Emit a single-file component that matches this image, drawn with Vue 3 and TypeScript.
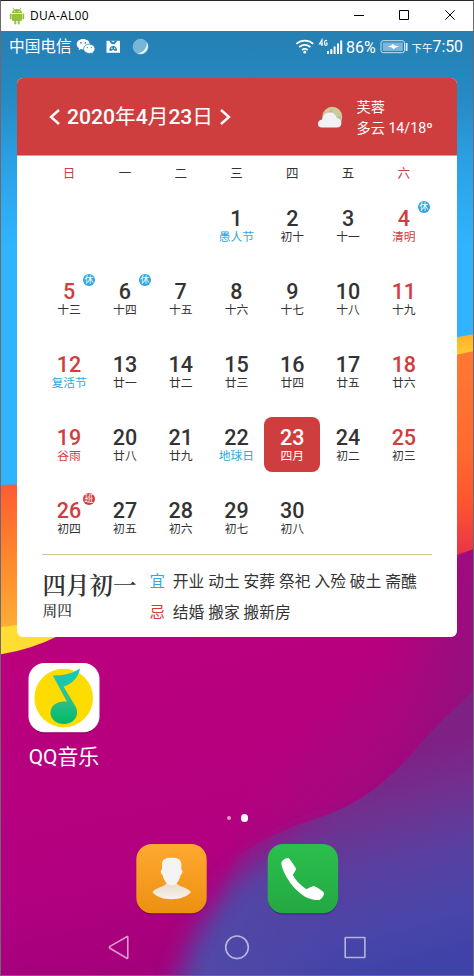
<script setup lang="ts">
interface Day {
  n: number
  sub: string
  red?: boolean
  subTone?: 'blue' | 'red'
  badge?: '休' | '班'
  selected?: boolean
}

const weekdays: string[] = ['日', '一', '二', '三', '四', '五', '六']
const leadingBlanks = 3

const lunar: string[] = [
  '愚人节', '初十', '十一', '清明', '十三', '十四', '十五', '十六', '十七', '十八',
  '十九', '复活节', '廿一', '廿二', '廿三', '廿四', '廿五', '廿六', '谷雨', '廿八',
  '廿九', '地球日', '四月', '初二', '初三', '初四', '初五', '初六', '初七', '初八',
]
const tones: Record<number, 'blue' | 'red'> = { 1: 'blue', 4: 'red', 12: 'blue', 19: 'red', 22: 'blue' }
const badges: Record<number, '休' | '班'> = { 4: '休', 5: '休', 6: '休', 26: '班' }

const days: Day[] = lunar.map((sub, i) => {
  const n = i + 1
  const column = (i + leadingBlanks) % 7
  return {
    n,
    sub,
    red: column === 0 || column === 6,
    subTone: tones[n],
    badge: badges[n],
    selected: n === 23,
  }
})

const good = ['开业', '动土', '安葬', '祭祀', '入殓', '破土', '斋醮'].join(' ')
const bad = ['结婚', '搬家', '搬新房'].join(' ')
</script>

<template>
  <div class="window">
    <header class="titlebar">
      <svg class="android" width="16" height="18" viewBox="0 0 16 18">
        <g fill="#97c03d">
          <path d="M3 6.1C3 3.600 5.200 2 8 2s5 1.600 5 4.100z" />
          <path d="M4 .7 5.400 3M12 .7 10.600 3" stroke="#97c03d" stroke-width=".8" />
          <path d="M3 6.800h10v6.300a1 1 0 0 1-1 1h-1.300v2.300a1 1 0 0 1-2 0v-2.300H7.300v2.300a1 1 0 0 1-2 0v-2.300H4a1 1 0 0 1-1-1z" />
          <rect x=".8" y="6.600" width="1.800" height="5.800" rx=".9" />
          <rect x="13.400" y="6.600" width="1.800" height="5.800" rx=".9" />
        </g>
        <circle cx="5.800" cy="4.300" r=".55" fill="#fff" /><circle cx="10.200" cy="4.300" r=".55" fill="#fff" />
      </svg>
      <span class="title">DUA-AL00</span>
      <svg class="controls" width="104" height="12" viewBox="0 0 104 12" fill="none" stroke="#000" stroke-width="1">
        <path d="M0 6.500h10M45.500 1.500h9v9h-9zM91.300 1.300l9.400 9.400M100.700 1.300l-9.400 9.400" />
      </svg>
    </header>

    <main class="screen">
      <svg class="wallpaper" viewBox="1 31 472 944" preserveAspectRatio="none">
        <defs>
          <linearGradient id="sky" gradientUnits="userSpaceOnUse" x1="0" y1="31" x2="0" y2="245">
            <stop offset="0" stop-color="#257fb3" />
            <stop offset=".32" stop-color="#268bc4" />
            <stop offset=".62" stop-color="#2ba1e4" />
            <stop offset="1" stop-color="#30b4ff" />
          </linearGradient>
          <linearGradient id="orangeL" gradientUnits="userSpaceOnUse" x1="0" y1="484" x2="0" y2="626">
            <stop offset="0" stop-color="#ff5b32" />
            <stop offset=".5" stop-color="#ff862d" />
            <stop offset="1" stop-color="#ffac34" />
          </linearGradient>
          <linearGradient id="orangeR" gradientUnits="userSpaceOnUse" x1="0" y1="350" x2="0" y2="554">
            <stop offset="0" stop-color="#ff7933" />
            <stop offset=".5" stop-color="#ff6a2f" />
            <stop offset=".75" stop-color="#ff5430" />
            <stop offset="1" stop-color="#e93448" />
          </linearGradient>
          <linearGradient id="yellowR" x1="0" y1="0" x2="0" y2="1">
            <stop offset="0" stop-color="#ffae2c" /><stop offset=".8" stop-color="#ffd731" />
          </linearGradient>
          <linearGradient id="magenta" gradientUnits="userSpaceOnUse" x1="150" y1="620" x2="230" y2="976">
            <stop offset="0" stop-color="#bb007d" />
            <stop offset=".65" stop-color="#b20080" />
            <stop offset="1" stop-color="#a1007a" />
          </linearGradient>
          <linearGradient id="magentaShade" gradientUnits="userSpaceOnUse" x1="330" y1="695" x2="440" y2="790">
            <stop offset="0" stop-color="#a4087e" stop-opacity="0" />
            <stop offset=".5" stop-color="#a3087e" stop-opacity=".8" />
            <stop offset="1" stop-color="#930b7c" />
          </linearGradient>
          <linearGradient id="edgeR" gradientUnits="userSpaceOnUse" x1="400" y1="0" x2="474" y2="0">
            <stop offset="0" stop-color="#90117f" stop-opacity="0" />
            <stop offset="1" stop-color="#90117f" stop-opacity=".7" />
          </linearGradient>
          <linearGradient id="indigo" gradientUnits="userSpaceOnUse" x1="340" y1="770" x2="395" y2="976">
            <stop offset="0" stop-color="#7f2085" />
            <stop offset=".22" stop-color="#71308f" />
            <stop offset=".48" stop-color="#593f9f" />
            <stop offset=".75" stop-color="#4a45a9" />
            <stop offset="1" stop-color="#3f42a8" />
          </linearGradient>
          <linearGradient id="hazeFade" gradientUnits="userSpaceOnUse" x1="215" y1="0" x2="335" y2="0">
            <stop offset="0" stop-color="#000" />
            <stop offset="1" stop-color="#fff" />
          </linearGradient>
          <mask id="softLeft" maskUnits="userSpaceOnUse" x="0" y="600" width="474" height="376">
            <path d="M0 600H474V976H0z" fill="url(#hazeFade)" />
          </mask>
          <filter id="soft" x="-20%" y="-20%" width="140%" height="140%"><feGaussianBlur stdDeviation="13" /></filter>
        </defs>
        <path d="M0 31H474V976H0z" fill="url(#sky)" />
        <path d="M380 352 474 334V370H380z" fill="url(#yellowR)" />
        <path d="M380 371 474 351V600H380z" fill="url(#orangeR)" />
        <path d="M0 485 60 483V640H0z" fill="url(#orangeL)" />
        <path d="M0 627 60 620V660H0z" fill="#ffdd31" />
        <path d="M0 654.500Q30 650 58 636L430 566 474 549V976H0z" fill="url(#magenta)" />
        <path d="M300 590 474 549V976H200Z" fill="url(#magentaShade)" />
        <path d="M400 575 474 549V750H400z" fill="url(#edgeR)" />
        <path d="M170 1000 195 935 236 878 272 854 340 825V1000z" fill="#504aa8" filter="url(#soft)" />
        <path d="M474 690Q443 718 419 745C382 790 349 808 315 819Q270 833 235 858L200 976H474z" fill="url(#indigo)" mask="url(#softLeft)" />
      </svg>

      <div class="statusbar">
        <span class="carrier">中国电信</span>
        <svg class="left-icons" width="74" height="18" viewBox="76 38 74 18">
          <g fill="#fff">
            <path d="M83.200 39c-3.700 0-6.500 2.300-6.500 5.200 0 1.700.9 3.100 2.400 4.100l-.7 2 2.400-1.200c.8.2 1.600.3 2.400.3 3.700 0 6.500-2.300 6.500-5.200S86.900 39 83.200 39z" />
            <path d="M89.300 44.200c-3.200 0-5.700 2-5.700 4.600s2.500 4.600 5.700 4.600c.7 0 1.300-.1 1.900-.3l2 1-.5-1.700c1.400-.8 2.200-2.100 2.200-3.600 0-2.600-2.500-4.600-5.600-4.600z" stroke="#2687be" stroke-width=".7" />
            <path d="M106.500 40.800h13.500v12h-13.500z" />
          </g>
          <g fill="#2687be">
            <circle cx="81" cy="42.800" r=".85" /><circle cx="85.400" cy="42.800" r=".85" />
            <circle cx="87.400" cy="47.600" r=".7" /><circle cx="91.300" cy="47.600" r=".7" />
            <path d="M109 40.800h2.200l2 1.500 2-1.500h2.200l-2.600 3.300h-3.200z" />
            <path d="M109.300 50.800c0-3.300 1.500-4.800 3.900-4.800s3.900 1.500 3.900 4.800h-2.400l-1.500-1.300-1.500 1.300z" />
          </g>
          <circle cx="111.800" cy="48.200" r=".7" fill="#fff" /><circle cx="114.700" cy="48.200" r=".7" fill="#fff" />
          <circle cx="140.600" cy="46.700" r="7.400" fill="#76b4d8" stroke="#8fc3e0" stroke-width=".8" />
          <path d="M147 42.500a7.700 7.700 0 0 1-10 10.600c5.500.2 9.500-4 10-10.600z" fill="#e4f3fa" />
        </svg>
        <svg class="signal" width="48" height="18" viewBox="296 38 48 18">
          <g fill="none" stroke="#fff" stroke-width="1.700">
            <path d="M297.300 43.800c5-4.300 12-4.300 17 0M300.200 47c3.500-2.800 7.700-2.800 11.200 0M303 50c2-1.500 3.600-1.500 5.600 0" />
          </g>
          <circle cx="305.800" cy="52.200" r="1.400" fill="#fff" />
          <path d="M328 50.900h2v3h-2zM331.300 49.200h2v4.700h-2zM334.600 46.500h2v7.400h-2zM338 43.500h2v10.400h-2zM341.200 40.500h2v13.400h-2z" fill="#fff" />
          <path d="M323 46v-6.300l-2.500 4.300h3.600M328 40.900c-.8-1-2.500-.9-2.500 2s1.900 3 2.500 1.900v-1.700h-1.200" fill="none" stroke="#fff" stroke-width="1.100" />
        </svg>
        <span class="percent">86%</span>
        <svg class="battery" width="28" height="14" viewBox="380 40 28 14">
          <rect x="381" y="40.700" width="23.500" height="12" rx="2.200" fill="none" stroke="#cce3f0" />
          <rect x="382.800" y="42.500" width="20" height="8.400" fill="#7db8da" />
          <path d="M387.500 46.600 391.800 45.300 392.500 43.800 394.600 45.500 399 46.300 395.500 47.800 393.700 49.300 391.500 47.600z" fill="#fff" />
          <path d="M406.600 43v8" stroke="#e4f1f8" stroke-width="1.800" />
        </svg>
        <span class="clock"><small>下午</small>7:50</span>
      </div>

      <section class="card">
        <div class="card-head">
          <svg width="12" height="18" viewBox="0 0 12 18" fill="none" stroke="#fff" stroke-width="2.400"><path d="M10 2 2 9l8 7" /></svg>
          <h1><b>2020</b>年<b>4</b>月<b>23</b>日</h1>
          <svg width="12" height="18" viewBox="0 0 12 18" fill="none" stroke="#fff" stroke-width="2.400"><path d="m2 2 8 7-8 7" /></svg>
          <svg class="weather-icon" width="26" height="22" viewBox="317 105.500 26 22">
            <circle cx="332.300" cy="116.300" r="10" fill="#cfca9e" />
            <circle cx="331" cy="111" r="1.600" fill="#bdb98f" /><circle cx="339" cy="117" r="1.400" fill="#bdb98f" />
            <path d="M321.800 127c-5.200 0-5.200-7.700.3-8 .5-3.500 3-7 8-7 4 0 6 2.500 6.600 5.600 6 .5 6.500 9.400.2 9.400z" fill="#f2f1f6" />
          </svg>
          <div class="weather"><span>芙蓉</span><span>多云 14/18º</span></div>
        </div>

        <div class="weekdays">
          <span v-for="(w, i) in weekdays" :key="w" :class="{ red: i === 0 || i === 6 }">{{ w }}</span>
        </div>
        <div class="days">
          <span v-for="b in leadingBlanks" :key="'b' + b"></span>
          <div v-for="d in days" :key="d.n" class="day" :class="{ selected: d.selected }">
            <b :class="{ red: d.red && !d.selected }">{{ d.n }}</b>
            <span :class="d.subTone">{{ d.sub }}</span>
            <i v-if="d.badge" :class="{ work: d.badge === '班' }">{{ d.badge }}</i>
          </div>
        </div>

        <div class="almanac">
          <div class="today">
            <div class="lunar-date">四月初一</div>
            <div class="lunar-week">周四</div>
          </div>
          <div class="advice">
            <p><em class="blue">宜</em>{{ good }}</p>
            <p><em class="red">忌</em>{{ bad }}</p>
          </div>
        </div>
      </section>

      <div class="app">
        <svg width="78" height="78" viewBox="25 660 78 78">
          <defs>
            <linearGradient id="note" x1="0" y1="0" x2="0" y2="1"><stop offset="0" stop-color="#0fc9c6" /><stop offset=".55" stop-color="#2fc08c" /><stop offset="1" stop-color="#00ba65" /></linearGradient>
          </defs>
          <rect x="29" y="664.500" width="70" height="69" rx="16" fill="#700050" opacity=".6" />
          <rect x="28.500" y="663" width="71" height="69.300" rx="16" fill="#fff" />
          <circle cx="63.700" cy="698" r="29.300" fill="#ffdc00" />
          <path d="M52.800 675.500Q70 675.500 80 668.400 78 681 63.600 686.800L75.300 706C80.500 715 74 724 64 724c-8 0-13.500-5-13.500-11 0-8.500 8-12.500 16.500-11.300z" fill="url(#note)" />
        </svg>
        <span>QQ音乐</span>
      </div>

      <div class="pager"><i></i><i class="on"></i></div>

      <div class="dock">
        <svg width="74" height="76" viewBox="134 842 74 76">
          <defs>
            <linearGradient id="amber" x1="0" y1="0" x2="0" y2="1"><stop offset="0" stop-color="#ffa932" /><stop offset="1" stop-color="#ec9010" /></linearGradient>
            <linearGradient id="bust" x1="0" y1="0" x2="0" y2="1"><stop offset="0" stop-color="#e8dccb" /><stop offset="1" stop-color="#f7f2ec" /></linearGradient>
          </defs>
          <rect x="136.500" y="845.500" width="70" height="69" rx="15.500" fill="#600048" opacity=".6" />
          <rect x="136.300" y="844" width="70.400" height="69.200" rx="15.500" fill="url(#amber)" />
          <path d="M167 883c-3 4-11 4.500-14.500 9 2.500 4 9.500 7.200 19 7.200s16.500-3.200 19.500-7.200c-3.500-4.500-11.500-5-15-9z" fill="url(#bust)" />
          <path d="M162 864c0-4.500 3.500-6.300 9.600-6.300s9.700 1.800 9.700 6.300v5.500c1.900 0 1.300 4.500-.6 5.500-.7 3-2 5.500-3.700 8-2.500 3-8 3-10.700 0-1.700-2.500-3-5-3.700-8-1.900-1-2.500-5.500-.6-5.500z" fill="#f4f4f4" />
        </svg>
        <svg width="74" height="76" viewBox="266 842 74 76">
          <defs>
            <linearGradient id="green" x1="0" y1="0" x2="0" y2="1"><stop offset="0" stop-color="#2bbf4d" /><stop offset="1" stop-color="#24a943" /></linearGradient>
          </defs>
          <rect x="268" y="845.500" width="70" height="69" rx="15.500" fill="#2c2870" opacity=".7" />
          <rect x="267.700" y="844" width="70.400" height="69.200" rx="15.500" fill="url(#green)" />
          <path d="M283.500 859.700Q286 857.700 288.500 858 290.500 859.500 296 868.500 296 870.500 292.800 874.700 296 882 306.500 889.300 311 886.500 314 886 318 887.500 323.500 892 324.500 893 323.500 895.500 322 899 319.500 900 313 900.500 305 896.700 293 889 286.500 877 281.500 868 281.300 863 281.500 861 283.500 859.700Z" fill="#fff" />
        </svg>
      </div>

      <nav class="navkeys">
        <svg width="24" height="26" viewBox="107 934 24 26"><path d="M110 946.400 126.800 936.700q1-.5 1 .5v20.500q0 1-1 .5L110 948.300q-1.200-.9 0-1.900z" /></svg>
        <svg width="26" height="26" viewBox="224 934 26 26"><circle cx="237" cy="947.300" r="11.300" /></svg>
        <svg width="24" height="24" viewBox="343 935 24 24"><rect x="345.200" y="937.500" width="19.700" height="20" rx=".6" /></svg>
      </nav>
    </main>
  </div>
</template>

<style>
body { margin: 0; }
</style>

<style scoped>
.window {
  box-sizing: border-box;
  width: 474px;
  height: 976px;
  display: flex;
  flex-direction: column;
  overflow: hidden;
  border: 1px solid #6c6a70;
  border-top-color: #29262b;
  font-family: Roboto, "Noto Sans CJK SC", sans-serif;
  color: #333;
}
.titlebar {
  flex: 0 0 30px;
  display: flex;
  align-items: center;
  box-sizing: border-box;
  padding: 0 15px 0 8px;
  background: #fff;
  color: #000;
}
.title {
  margin-left: 5px;
  font: 12px/18px "Open Sans", sans-serif;
  letter-spacing: 0.3px;
}
.controls { margin-left: auto; position: relative; top: -1px; }
.screen {
  position: relative;
  flex: 1;
  display: flex;
  flex-direction: column;
  min-height: 0;
}
.wallpaper {
  position: absolute;
  inset: 0;
  width: 472px;
  height: 944px;
}
.statusbar, .card, .app, .pager, .dock, .navkeys { position: relative; }
.statusbar {
  height: 32px;
  display: flex;
  align-items: center;
  box-sizing: border-box;
  padding: 0 10px 0 8px;
  color: #fff;
  white-space: nowrap;
}
.carrier { font-size: 15.700px; line-height: 24px; }
.left-icons { margin-left: 4px; }
.signal { margin-left: auto; }
.percent { margin-left: 3.500px; width: 30px; font-size: 16px; line-height: 24px; }
.battery { margin-left: 3.500px; }
.clock { margin-left: 4px; font-size: 15.800px; line-height: 24px; }
.clock, .percent { padding-top: 1px; }
.clock small { font-size: 10.500px; }

.card {
  box-sizing: border-box;
  width: 440px;
  height: 559px;
  margin: 15px 0 0 16px;
  border-radius: 6px;
  background: #fff;
  overflow: hidden;
}
.card-head {
  height: 78px;
  box-sizing: border-box;
  border-bottom: 1px solid #d3a57c;
  background: #cf3e3e;
  color: #fff;
  display: flex;
  align-items: center;
  padding-left: 32px;
}
h1 {
  margin: 0 6px;
  width: 146px;
  font-size: 20.700px;
  line-height: 30px;
  font-weight: 400;
  white-space: nowrap;
}
h1 b { font-size: 21.100px; font-weight: 500; }
.weather-icon { margin-left: 85.500px; }
.weather {
  margin-left: 14px;
  padding-top: 2px;
  display: flex;
  flex-direction: column;
  font-size: 14.200px;
  line-height: 21px;
  white-space: nowrap;
}
.weekdays, .days {
  display: grid;
  grid-template-columns: repeat(7, 55.800px);
  margin-left: 24.200px;
}
.weekdays {
  height: 35px;
  line-height: 35px;
  font-size: 12.500px;
  text-align: center;
}
.days { grid-auto-rows: 55px; row-gap: 18px; margin-top: 6.600px; }
.day {
  position: relative;
  display: flex;
  flex-direction: column;
  align-items: center;
  border-radius: 8px;
  padding-top: 9px;
  box-sizing: border-box;
}
.day b { font-size: 21.500px; line-height: 23px; font-weight: 500; }
.day span { font-size: 11.800px; line-height: 14px; white-space: nowrap; }
.red, .day .red { color: #cf3e3e; }
.blue, .day .blue { color: #2fa8db; }
.day.selected { background: #cf3e3e; color: #fff; }
.day i {
  position: absolute;
  left: 41.800px;
  top: 3px;
  width: 12px;
  height: 12px;
  border-radius: 50%;
  background: #30a5dc;
  color: #fff;
  font-size: 9px;
  line-height: 12px;
  text-align: center;
  font-style: normal;
}
.day i.work { background: #cf3e3e; }
.almanac {
  display: flex;
  margin: 9.500px 25px 0 24.500px;
  border-top: 1px solid #d9c19a;
  padding-top: 11px;
}
.today {
  width: 107px;
  padding-left: 1px;
  font-family: "Noto Serif CJK SC", "Liberation Serif", "Noto Sans CJK SC", serif;
}
.lunar-date { font-size: 23.500px; line-height: 36px; font-weight: 600; white-space: nowrap; }
.lunar-week { font-size: 14.700px; line-height: 16px; font-weight: 500; }
.advice { padding-top: 1px; }
.advice p { margin: 0; font-size: 15.750px; line-height: 30.500px; white-space: nowrap; }
.advice em { display: inline-block; width: 23.300px; font-style: normal; font-size: 15.500px; }

.app {
  width: 78px;
  margin: 23px 0 0 24px;
  display: flex;
  flex-direction: column;
  align-items: center;
  color: #fff;
}
.app span { margin-top: 6px; font-size: 20.900px; line-height: 26px; white-space: nowrap; }
.pager {
  height: 8px;
  margin-top: 44px;
  padding-left: 225.700px;
  display: flex;
  align-items: center;
}
.pager i { width: 4.600px; height: 4.600px; border-radius: 50%; background: rgba(255, 255, 255, .6); }
.pager .on { width: 7.400px; height: 7.400px; margin-left: 9.500px; background: #fff; }
.dock { display: flex; gap: 58px; margin: 20px 0 0 133px; }
.navkeys {
  display: flex;
  align-items: center;
  margin: 16px 0 0 106px;
}
.navkeys svg { fill: none; stroke: rgba(255, 255, 255, .6); stroke-width: 1.600; }
.navkeys svg + svg { margin-left: 93px; }
</style>
